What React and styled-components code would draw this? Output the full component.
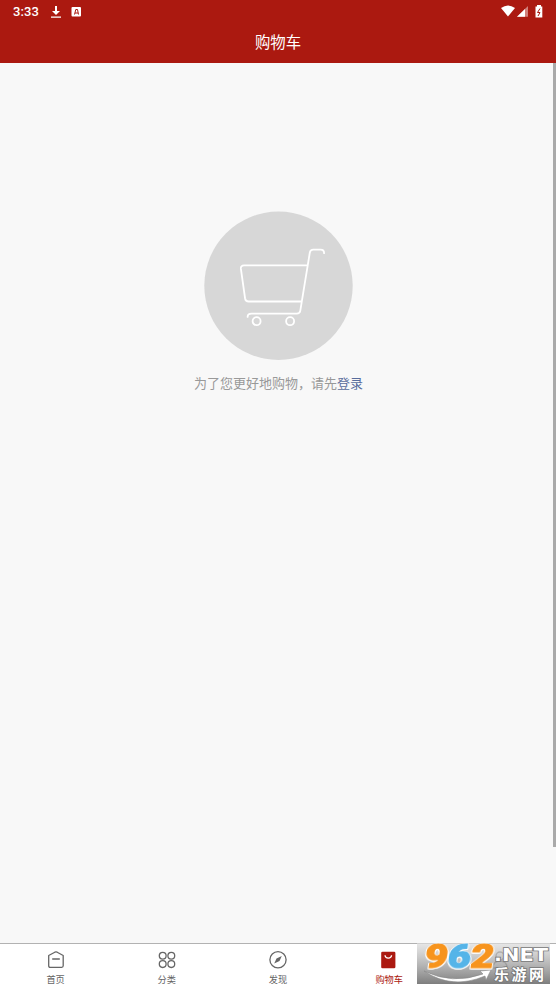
import React from 'react';
import styled, { createGlobalStyle } from 'styled-components';

const GlobalStyle = createGlobalStyle`
  * {
    box-sizing: border-box;
  }
  body {
    margin: 0;
    background: #fff;
    font-family: 'Noto Sans CJK SC', sans-serif;
  }
`;

const Screen = styled.div`
  position: relative;
  display: flex;
  flex-direction: column;
  width: 556px;
  height: 984px;
  background: #f8f8f8;
`;

const Header = styled.header`
  height: 63px;
  background: #ab1910;
  color: #fff;
`;

const StatusBar = styled.div`
  display: flex;
  align-items: center;
  height: 23px;
  padding: 0 12px 0 13px;
`;

const Clock = styled.span`
  width: 37px;
  font: 500 13px/23px Roboto, sans-serif;
  letter-spacing: 0.1px;
`;

const StatusIcons = styled.svg`
  display: block;
  margin-left: ${(p) => (p.$end ? 'auto' : 0)};
`;

const Title = styled.h1`
  margin: 0;
  font-size: 15.4px;
  font-weight: 400;
  line-height: 37px;
  text-align: center;
`;

const Content = styled.main`
  display: flex;
  flex: 1;
  justify-content: space-between;
  padding-left: 4px;
`;

const Empty = styled.section`
  flex: 1;
  display: flex;
  flex-direction: column;
  align-items: center;
  padding-top: 148px;
`;

const Hint = styled.p`
  margin: 13px 0 0;
  color: #999;
  font-size: 13px;
  line-height: 20px;
`;

const Login = styled.a`
  color: #586c9c;
`;

const ScrollThumb = styled.div`
  width: 3px;
  height: 784px;
  background: #aaa;
`;

const TabBar = styled.nav`
  display: flex;
  height: 41px;
  border-top: 1px solid #b2b2b2;
  background: #fff;
`;

const Tab = styled.div`
  flex: 1;
  display: flex;
  flex-direction: column;
  align-items: center;
  padding-top: 5px;
  color: ${(p) => (p.$active ? '#ab1910' : '#666')};
  font-size: 9.2px;
  line-height: 14px;

  svg {
    display: block;
    flex-shrink: 0;
    margin-bottom: 1px;
  }
`;

const Watermark = styled.svg`
  position: absolute;
  left: 417px;
  bottom: 0;
  overflow: visible;
`;

const Digits = styled.g`
  font: 900 32px Roboto, sans-serif;
  stroke-width: 1.2px;
  stroke-linejoin: round;
  filter: drop-shadow(1px 0 0 #fff) drop-shadow(-1px 0 0 #fff) drop-shadow(0 1px 0 #fff);
`;

const line = { fill: 'none', stroke: 'currentColor', strokeWidth: 1.3 };

const HomeIcon = () => (
  <svg width="22" height="22" viewBox="0 0 22 22" {...line} strokeLinejoin="round">
    <path d="M3.700 6.500 9.800 3.200q1.200-.6 2.400 0l6 3.300v10.300q0 1.500-1.500 1.500H5.200q-1.500 0-1.500-1.500ZM7.200 10h7.600" />
  </svg>
);

const GridIcon = () => (
  <svg width="22" height="22" viewBox="0 0 22 22" {...line}>
    <circle cx="6.700" cy="6.700" r="3.400" />
    <circle cx="15.300" cy="6.700" r="3.400" />
    <circle cx="6.700" cy="15.100" r="3.400" />
    <circle cx="15.300" cy="15.100" r="3.400" />
  </svg>
);

const CompassIcon = () => (
  <svg width="22" height="22" viewBox="0 0 22 22" {...line}>
    <circle cx="11" cy="10.700" r="8.100" />
    <path d="m14.800 7-2.300 4.900-5.300 2.600 2.300-4.900Z" fill="currentColor" stroke="none" />
  </svg>
);

const BagIcon = () => (
  <svg width="22" height="22" viewBox="0 0 22 22">
    <rect x="3.200" y="2.700" width="14.200" height="16.500" rx="1.300" fill="currentColor" />
    <path d="M7 6.300q.3 2.900 3.300 2.900t3.300-2.900" fill="none" stroke="#fff" strokeWidth="1.300" />
  </svg>
);

const UserIcon = () => (
  <svg width="22" height="22" viewBox="0 0 22 22" {...line}>
    <circle cx="11" cy="7" r="4" />
    <path d="M4 19q0-7 7-7t7 7Z" />
  </svg>
);

const tabs = [
  { label: '首页', Icon: HomeIcon },
  { label: '分类', Icon: GridIcon },
  { label: '发现', Icon: CompassIcon },
  { label: '购物车', Icon: BagIcon, active: true },
  { label: '', Icon: UserIcon }
];

const EmptyCart = () => (
  <svg width="149" height="149" viewBox="0 0 149 149">
    <circle cx="74.500" cy="74.800" r="74.200" fill="#d7d7d7" />
    <g
      transform="translate(.1 .2)"
      fill="none"
      stroke="#fff"
      strokeWidth="1.800"
      strokeLinecap="round"
      strokeLinejoin="round"
    >
      <path d="M103 54.200H40q-3.600 0-3.200 3.500l4.200 29.600q.5 3 3.500 3H97" />
      <path d="M120 42q0-3.500-3.500-3.500h-7.300q-3 0-3.500 3l-9.500 58q-.5 3-3.500 3H47.500q-4 0-4 3.200" />
      <circle cx="52.500" cy="110" r="4" />
      <circle cx="86" cy="110" r="4" />
    </g>
  </svg>
);

const SiteBadge = () => (
  <Watermark width="133" height="41" viewBox="0 0 133 41">
    <defs>
      <linearGradient id="shade" x2="0" y2="1">
        <stop stopColor="#ddd" stopOpacity="0.700" />
        <stop offset="1" stopColor="#777" stopOpacity="0.950" />
      </linearGradient>
    </defs>
    <rect width="133" height="41" fill="url(#shade)" />
    <path
      d="M7 28q28 14 59 3l-3-3 11-1-5 10-1-4Q35 47 7 28Z"
      fill="#fff"
      stroke="#888"
      strokeWidth=".6"
    />
    <Digits transform="skewX(-8)">
      <text x="10" y="25" fill="#f7941d" stroke="#f7941d" textLength="23" lengthAdjust="spacingAndGlyphs">9</text>
      <text x="33" y="25" fill="#55b4e8" stroke="#55b4e8" textLength="23" lengthAdjust="spacingAndGlyphs">6</text>
      <text x="56" y="25" fill="#f7941d" stroke="#f7941d" textLength="23" lengthAdjust="spacingAndGlyphs">2</text>
    </Digits>
    <g fill="#fff" stroke="#777" strokeWidth="1.600" paintOrder="stroke" fontWeight="700">
      <text x="77" y="18" fontFamily="DejaVu Sans" fontSize="18" textLength="54" lengthAdjust="spacingAndGlyphs">.NET</text>
      <text x="77" y="36.500" fontFamily="Noto Sans CJK SC" fontSize="15" textLength="50">乐游网</text>
    </g>
  </Watermark>
);

export default function App() {
  return (
    <>
      <GlobalStyle />
      <Screen>
        <Header>
          <StatusBar>
            <Clock>3:33</Clock>
            <StatusIcons width="34" height="16" viewBox="0 0 34 16" fill="#fff">
              <path d="M5 2h2v5h3l-4 4-4-4h3ZM1 12.500h10v1.200H1Z" />
              <rect x="21.500" y="3" width="9.500" height="9.500" rx="1" />
              <path d="m24.500 10.500 1.300-5h1.700l1 5M25 9h3" fill="none" stroke="#ab1910" />
            </StatusIcons>
            <StatusIcons $end width="44" height="16" viewBox="0 0 44 16" fill="#fff">
              <path d="M1 4q7-5 14 0l-7 8.500Z" />
              <path d="M28 2v10.700H17Z" opacity=".45" />
              <path d="M25 5v7.700h-8Z" />
              <path d="M35.500 2.500H37V1h4v1.500h1.300v11h-6.800Z" />
              <path d="m40 4.500-2.500 4h2.500l-2 3.500" fill="none" stroke="#ab1910" />
            </StatusIcons>
          </StatusBar>
          <Title>购物车</Title>
        </Header>
        <Content>
          <Empty>
            <EmptyCart />
            <Hint>
              为了您更好地购物，请先<Login>登录</Login>
            </Hint>
          </Empty>
          <ScrollThumb />
        </Content>
        <TabBar>
          {tabs.map(({ label, Icon, active }, index) => (
            <Tab key={index} $active={active}>
              <Icon />
              {label}
            </Tab>
          ))}
        </TabBar>
        <SiteBadge />
      </Screen>
    </>
  );
}
